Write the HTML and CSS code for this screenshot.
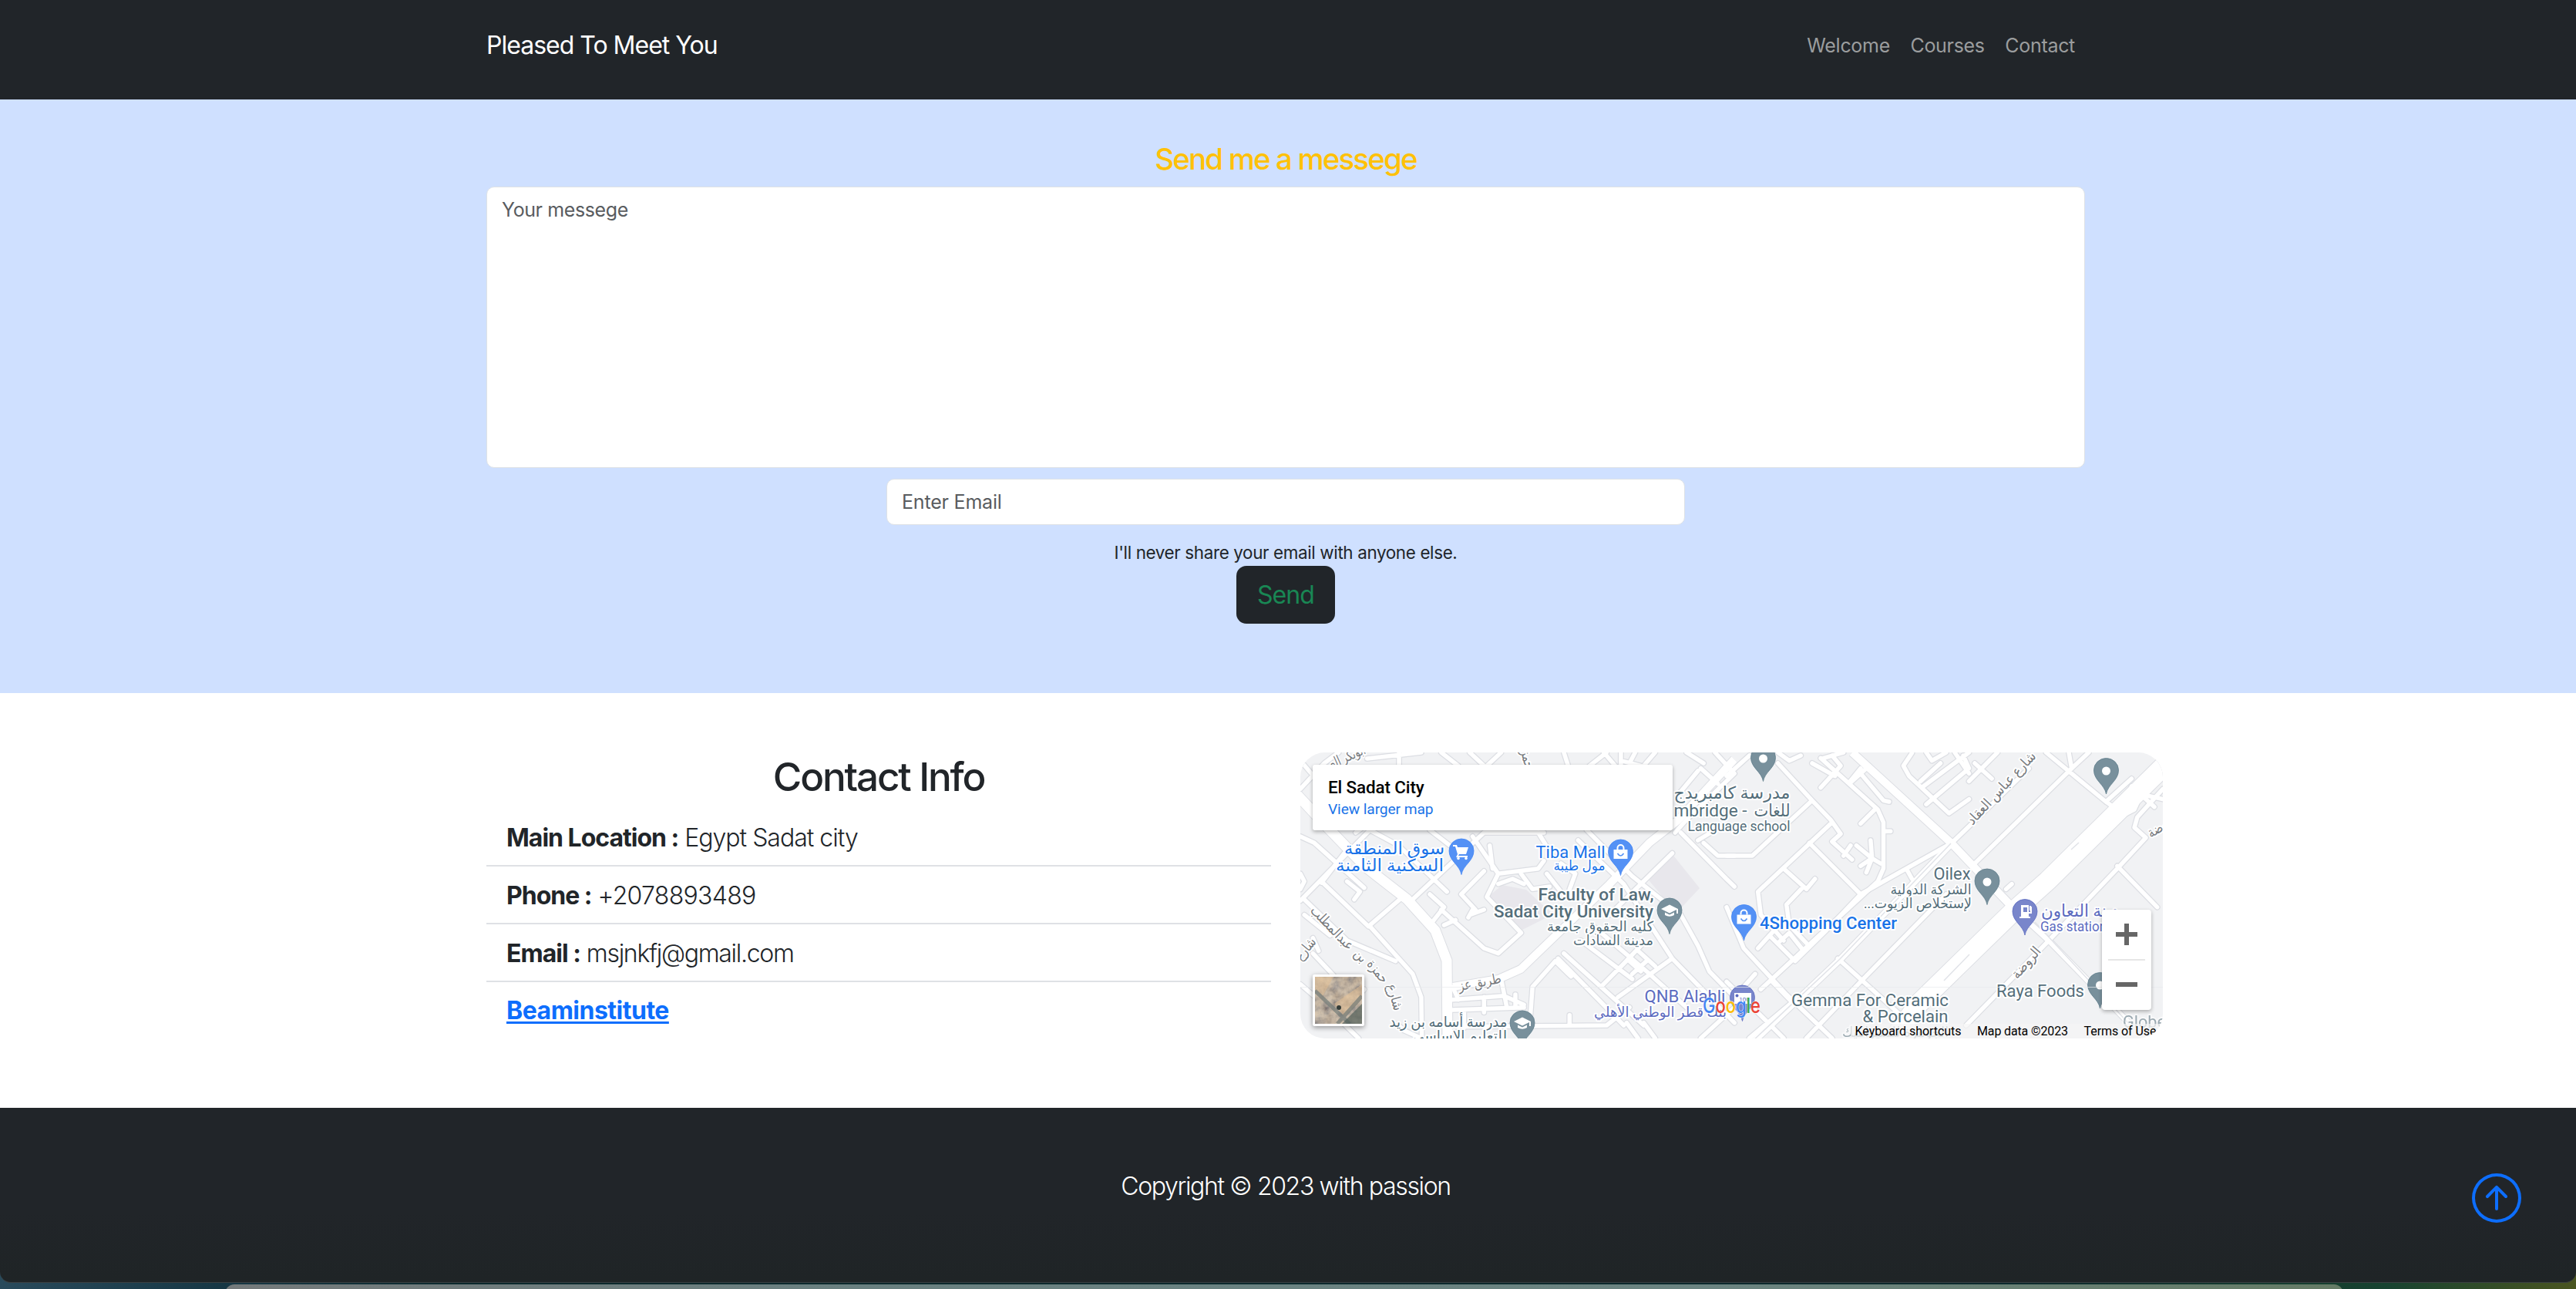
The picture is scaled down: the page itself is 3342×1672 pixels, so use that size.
FILE: index.html
```html
<!DOCTYPE html>
<html lang="en">
<head>
<meta charset="utf-8">
<title>Pleased To Meet You</title>
<link rel="stylesheet" href="styles.css">
</head>
<body>
<header class="navbar">
  <div class="container nav-inner">
    <a class="brand">Pleased To Meet You</a>
    <nav class="nav-links"><a>Welcome</a><a>Courses</a><a>Contact</a></nav>
  </div>
</header>

<section class="message">
  <form class="container message-form">
    <h4 class="message-title">Send me a messege</h4>
    <div class="field textarea"><span>Your messege</span></div>
    <div class="field email"><span>Enter Email</span></div>
    <small class="help">I'll never share your email with anyone else.</small>
    <button class="send" type="button"><span>Send</span></button>
  </form>
</section>

<section class="contact">
  <div class="container contact-grid">
    <div class="info">
      <h2 class="info-title"><span>Contact Info</span></h2>
      <ul class="info-list">
        <li><b>Main Location :</b> <span>Egypt Sadat city</span></li>
        <li><b>Phone :</b> <span class="phone">+2078893489</span></li>
        <li><b>Email :</b> <span class="mail">msjnkfj@gmail.com</span></li>
        <li><a class="site-link">Beaminstitute</a></li>
      </ul>
    </div>
    <div class="map">
      <svg class="map-canvas" viewBox="0 0 1119 371" width="1119" height="371">
        <defs>
          <path id="pin" d="M0 30.500C-2 18-16 13-16-.5A16 15.500 0 0 1 16-.5C16 13 2 18 0 30.500Z"/>
          <g id="cap"><path fill="#fff" d="M-11-2 0-7.500 11-2V4H9V-1L0 3.500ZM-6 2.500 0 5.500 6 2.500V6Q0 9.500-6 6Z"/></g>
          <g id="bag"><path fill="#fff" d="M-9-3H9V9H-9Z"/><path fill="none" stroke="#fff" stroke-width="2" d="M-4-3V-5A4 4 0 0 1 4-5V-3"/><path fill="none" stroke="#5491f5" stroke-width="1.600" d="M-4 2Q0 8 4 2"/></g>
          <g id="roads-west" class="road-net">
            <path d="M46 190 130 90 180 48M46 80 100 150M392 48V100M470 48 280 72M540 48 600 100M700 100 750 48M640 48 690 100M970 48 985 100M1060 100 1120 48M1110 48 1150 100M1170 48V100M1170 80 1240 100M1220 48 1200 90M1250 100 1290 48M1568 130 1400 310 1360 360M1380 200 1440 120M1450 110 1510 170M1500 48 1568 130M1400 48 1460 90"/>
            <path d="M46 375 95 400 270 575M46 625 290 350M46 520 60 550 46 580M120 550 285 725M285 725 405 610M210 550 255 590 235 620M60 620 210 780 380 860M60 680 150 760M110 820 90 770M90 830 200 960M290 725 440 910 470 1000 472 1160M200 440 120 555M240 360 265 340M290 350 390 410 560 590M430 630 690 360 900 360M500 600 550 650 500 720M500 350 570 410M650 375 740 520M710 410 720 500M740 520 880 500 900 470M690 510 610 600 660 660M640 680 690 660M650 660 635 690M740 520 700 610 820 750M820 750 740 830 690 810 540 660M740 560 790 540 830 560M820 520 860 580 920 570M910 520 960 590M960 480 1010 520 990 580M880 360 930 450M550 720 590 700"/>
            <path d="M1020 390 1180 560 1350 850 1568 1100M1050 350 1210 530 1380 680 1440 800 1480 900 1568 1000M1380 360 1540 540 1568 570M1350 440 1130 680M1460 400 1510 450 1568 450M1440 390 1500 350M950 850 1180 1110M970 830 1100 960 1250 1110M1030 780 1210 930M1080 730 1260 900 1400 1040M940 860 860 960 850 1110M940 860 995 920M1100 960 1180 870 1240 800M1160 1000 1350 850M1210 910 1260 860M1230 820 1290 880M1200 860 1240 900M580 1010 760 995 830 1030M580 1050 830 1040M580 960 600 1010M750 930 770 1040M800 990V1040M690 1000V1060M620 1050V1120M580 1115 1120 1110 1200 1040M990 1070V1110M250 1160 130 1030 46 950M270 970 220 1030M390 1110 410 1130 470 1160M1230 1160 1190 1100M1290 1160 1250 1100M1450 1160 1568 1040"/>
          </g>
          <g id="roads-east" class="road-net">
            <path d="M0 140 80 60M180 90 300 235 365 310 400 365 370 395 440 465M300 235 90 450H0M370 320 110 590 120 680 200 780M290 400 470 600M200 500 280 580 310 540M270 570 210 640 220 720 280 790M410 450 435 410M470 110 430 165M330 185 400 100 370 60M300 90 380 140M340 70 410 48M180 48 220 80 260 60M330 70 430 170 530 270 550 320V500L530 550 120 970M500 100 430 170M470 130 550 235 570 240M520 270 470 325M550 355H575M505 390 510 460 540 480M455 410 510 460 470 490M510 460 490 515M650 50 620 100 640 140 780 285 850 230M700 48 720 80 770 48M690 180 850 48M750 90 680 160M830 60 850 110 700 250M870 90 930 150M850 160 950 48M800 48 850 130M1060 110 790 400M1200 48 1210 110 870 480M1120 48 1330 240 1370 270M1210 110 1270 48M1330 240 1420 150"/>
            <path d="M0 650 60 810 210 990 370 1160M110 810 200 700M150 760 240 860M180 790 220 750 270 820M240 860 350 740 470 600 790 400M630 500 650 540M0 940 200 1160M60 960 100 910M160 940 230 1020 80 1160M280 1160 470 940 770 600M390 850 620 1080 700 1160M1530 190 1440 300 1430 340 1470 380 1370 500 1130 780 840 1110M1370 490 1510 650M1360 310 1430 270 1450 220M1420 180 1500 260M1450 210 1530 230M980 580 1000 560"/>
          </g>
        </defs>
        <rect width="1119" height="371" fill="#f1f2f4"/>
        <g fill="#e8e7ec"><path d="M448 161 481 130 518 176 488 208Z"/><path d="M245 186 262 172 293 178 310 194 328 210 288 230Z"/></g>
        <g class="casing">
          <use href="#roads-west" transform="translate(-17 -16) scale(.37 .33333)"/>
          <use href="#roads-east" transform="translate(553 -16) scale(.37 .33333)"/>
        </g>
        <g fill="none" stroke="#dcdee3">
          <path stroke-width="15" d="M-4 55 34 96 84 148 138 190 175 231 190 270 191 375"/>
          <path stroke-width="12" d="M198 304 257 294 286 281 338 231 401 171 453 117 490 88 563 9"/>
          <path stroke-width="12" d="M716 0 845 118 923 200"/><path stroke-width="9" d="M923 200 974 247 1080 356"/>
          <path stroke-width="10" d="M845 118 701 268 585 378"/>
          <path stroke-width="27" d="M1125 13 970 166 923 208 803 325 770 371"/>
        </g>
        <g class="surface">
          <use href="#roads-west" transform="translate(-17 -16) scale(.37 .33333)"/>
          <use href="#roads-east" transform="translate(553 -16) scale(.37 .33333)"/>
        </g>
        <g fill="none" stroke="#fff">
          <path stroke-width="13" d="M-4 55 34 96 84 148 138 190 175 231 190 270 191 375"/>
          <path stroke-width="10" d="M198 304 257 294 286 281 338 231 401 171 453 117 490 88 563 9"/>
          <path stroke-width="10" d="M716 0 845 118 923 200"/><path stroke-width="7" d="M923 200 974 247 1080 356"/>
          <path stroke-width="8" d="M845 118 701 268 585 378"/>
          <path stroke-width="25" d="M1125 13 970 166 923 208 803 325 770 371"/>
        </g>
        <path d="M844 118 700 268 585 376M953 220 1075 352M1000 126 1010 117M835 296 868 262" fill="none" stroke="#e1e3e8" stroke-width="1.500"/>
        <g class="labels street">
          <text x="58" y="13" textLength="58" lengthAdjust="spacingAndGlyphs" transform="rotate(-24 58 10)">أبوبكر الص</text>
          <text x="289" y="10" textLength="24" lengthAdjust="spacingAndGlyphs" transform="rotate(75 289 10)">حمز</text>
          <text x="40" y="233" textLength="72" lengthAdjust="spacingAndGlyphs" transform="rotate(46 40 229)">عبدالمطلب</text>
          <text x="77" y="269" textLength="16" lengthAdjust="spacingAndGlyphs" transform="rotate(48 77 265)">بن</text>
          <text x="99" y="289" textLength="33" lengthAdjust="spacingAndGlyphs" transform="rotate(52 99 285)">حمزة</text>
          <text x="121" y="322" textLength="35" lengthAdjust="spacingAndGlyphs" transform="rotate(74 121 318)">شارع</text>
          <text x="8" y="260" textLength="32" lengthAdjust="spacingAndGlyphs" transform="rotate(-50 8 256)">شارع</text>
          <text x="233" y="304" textLength="56" lengthAdjust="spacingAndGlyphs" transform="rotate(-11 233 300)">طريق عز</text>
          <text x="910" y="52" textLength="122" lengthAdjust="spacingAndGlyphs" transform="rotate(-47 910 47)">شارع عباس العقاد</text>
          <text x="943" y="278" textLength="48" lengthAdjust="spacingAndGlyphs" transform="rotate(-49 943 274)">الروضة</text>
          <text x="1116" y="103" textLength="34" lengthAdjust="spacingAndGlyphs" transform="rotate(-30 1116 99)">روضة</text>
        </g>
        <g class="labels shop">
          <text x="122" y="132" textLength="130" lengthAdjust="spacingAndGlyphs">سوق المنطقة</text>
          <text x="116" y="154" textLength="140" lengthAdjust="spacingAndGlyphs">السكنية الثامنة</text>
          <text x="350.500" y="136.500" textLength="90" lengthAdjust="spacingAndGlyphs">Tiba Mall</text>
          <text class="small" x="362" y="153" textLength="67" lengthAdjust="spacingAndGlyphs">مول طيبة</text>
          <text class="strong" x="685" y="229" textLength="178" lengthAdjust="spacingAndGlyphs">4Shopping Center</text>
        </g>
        <g class="labels place">
          <text class="strong" x="383.500" y="191.500" textLength="150" lengthAdjust="spacingAndGlyphs">Faculty of Law,</text>
          <text class="strong" x="354.500" y="214" textLength="207" lengthAdjust="spacingAndGlyphs">Sadat City University</text>
          <text class="small" x="389" y="232" textLength="138" lengthAdjust="spacingAndGlyphs">كليه الحقوق جامعة</text>
          <text class="small" x="406" y="250" textLength="104" lengthAdjust="spacingAndGlyphs">مدينة السادات</text>
          <text class="mid" x="192" y="356" textLength="153" lengthAdjust="spacingAndGlyphs">مدرسة أسامه بن زيد</text>
          <text class="mid" x="207" y="374" textLength="122" lengthAdjust="spacingAndGlyphs">للتعليم الاساسي</text>
          <text x="560" y="60" textLength="151" lengthAdjust="spacingAndGlyphs">مدرسة كامبريدج</text>
          <text x="532" y="83" textLength="95" lengthAdjust="spacingAndGlyphs">mbridge -</text>
          <text x="612" y="83" textLength="47" lengthAdjust="spacingAndGlyphs">للغات</text>
          <text class="small" x="569" y="101.500" textLength="133" lengthAdjust="spacingAndGlyphs">Language school</text>
          <text x="845.500" y="165" textLength="48" lengthAdjust="spacingAndGlyphs">Oilex</text>
          <text class="small" x="818" y="184" textLength="105" lengthAdjust="spacingAndGlyphs">الشركة الدولية</text>
          <text class="small" x="801" y="202" textLength="140" lengthAdjust="spacingAndGlyphs" direction="rtl">لإستخلاص الزيوت...</text>
          <text x="960" y="317" textLength="114" lengthAdjust="spacingAndGlyphs">Raya Foods</text>
          <text x="739" y="329" textLength="204" lengthAdjust="spacingAndGlyphs">Gemma For Ceramic</text>
          <text x="785" y="349.500" textLength="111" lengthAdjust="spacingAndGlyphs">&amp; Porcelain</text>
          <g opacity=".55"><text class="small" x="772" y="369" textLength="138" lengthAdjust="spacingAndGlyphs">الجوهرة للسيراميك</text>
          <text x="1095" y="357" textLength="56" lengthAdjust="spacingAndGlyphs">Globe</text></g>
        </g>
        <g class="labels bank">
          <text x="499" y="324" textLength="105" lengthAdjust="spacingAndGlyphs">QNB Alahli</text>
          <text class="small" x="467" y="343" textLength="172" lengthAdjust="spacingAndGlyphs">بنك قطر الوطني الأهلي</text>
          <text x="1018" y="213" textLength="114" lengthAdjust="spacingAndGlyphs">مدينة التعاون</text>
          <text class="small" x="1003" y="232" textLength="86" lengthAdjust="spacingAndGlyphs">Gas station</text>
        </g>
        <g fill="#78909c" stroke="#607d8b" stroke-width=".8">
          <use href="#pin" x="600.500" y="7"/><use href="#pin" x="1045.500" y="23.500"/><use href="#pin" x="891" y="167"/><use href="#pin" x="1037.500" y="301.500"/><use href="#pin" x="479" y="205"/><use href="#pin" x="288" y="351"/>
        </g>
        <g fill="#fff"><circle cx="600.500" cy="8" r="5.500"/><circle cx="1045.500" cy="24" r="5.500"/><circle cx="891" cy="168" r="5.500"/><circle cx="1037.500" cy="302" r="5.500"/></g>
        <use href="#cap" x="479" y="205"/><use href="#cap" x="288" y="351"/>
        <g fill="#5491f5" stroke="#4285f4" stroke-width=".8"><use href="#pin" x="209" y="128"/><use href="#pin" x="415.500" y="129"/><use href="#pin" x="575.500" y="213.500"/></g>
        <use href="#bag" x="415.500" y="129"/><use href="#bag" x="575.500" y="213.500"/>
        <path fill="#fff" d="M198 120H203L204 123H218L215 132H206L205 134H217V136H202L204 132 201 122H198Z"/><circle cx="205" cy="137.500" r="1.800" fill="#fff"/><circle cx="215" cy="137.500" r="1.800" fill="#fff"/>
        <g fill="#7986cb" stroke="#5c6bc0" stroke-width=".8"><use href="#pin" x="940" y="206.500"/><use href="#pin" x="573.500" y="318"/></g>
        <path fill="#fff" fill-rule="evenodd" d="M935 198H945V213H947V215H933V213H935ZM938 201V207H943V201Z"/><path d="M945 208H948V200M947 199V205" fill="none" stroke="#fff" stroke-width="2"/>
        <rect x="563" y="312" width="22" height="14" fill="#fff"/><circle cx="566.500" cy="315.500" r="2" fill="#5c6bc0"/><text class="atm" x="576" y="323">100</text>
        <g class="google"><text x="522" y="337.500" textLength="75" lengthAdjust="spacingAndGlyphs"><tspan fill="#4285f4">G</tspan><tspan fill="#ea4335">o</tspan><tspan fill="#fbbc04">o</tspan><tspan fill="#4285f4">g</tspan><tspan fill="#34a853">l</tspan><tspan fill="#ea4335">e</tspan></text></g>
        <path d="M0 304.500H1119" stroke="#e7e9ec" stroke-width=".7"/>
        <path fill="#f5f5f5" opacity=".7" d="M714 352H1119V371H714Z"/>
        <g class="legal"><text x="719.500" y="367" textLength="138">Keyboard shortcuts</text><text x="878" y="367" textLength="118">Map data ©2023</text><text x="1016.500" y="367" textLength="94">Terms of Use</text></g>
      </svg>
      <div class="place-card"><strong>El Sadat City</strong><a>View larger map</a></div>
      <div class="satellite">
        <svg viewBox="0 0 61 61" width="61" height="61" preserveAspectRatio="none">
          <filter id="terrain" x="0" y="0" width="1" height="1"><feTurbulence type="fractalNoise" baseFrequency=".09" numOctaves="4" seed="8"/><feColorMatrix values="1.100 0 0 0 .02  .9 .1 0 0 0  .6 .2 0 0 .03  0 0 0 0 1"/></filter>
          <rect width="61" height="61" fill="#a8957d"/><rect width="61" height="61" filter="url(#terrain)" opacity=".65"/>
          <path d="M0 0 24 0 10 25 0 17ZM25 35 61 10V29L38 52Z" fill="#e2bd92" opacity=".5"/>
          <path d="M0 18 45 61M61 25 29 61" stroke="#737b78" stroke-width="5" opacity=".7"/><path d="M61 35V61H35Z" fill="#53615b" opacity=".7"/><circle cx="31" cy="40" r="3" fill="#353d39"/>
        </svg>
      </div>
      <div class="zoom-control">
        <svg viewBox="0 0 64 130" width="64" height="130"><path d="M18 32H46M32 18V46M18 97H46" stroke="#666" stroke-width="6"/><path d="M8 65H56" stroke="#e6e6e6" stroke-width="2"/></svg>
      </div>
    </div>
  </div>
</section>

<footer class="footer">
  <p class="copyright">Copyright © 2023 with passion</p>
  <a class="to-top"><svg viewBox="0 0 16 16" width="64" height="64" fill="#0d6efd"><path d="M1 8a7 7 0 1 0 14 0A7 7 0 0 0 1 8m15 0A8 8 0 1 1 0 8a8 8 0 0 1 16 0m-7.500 3.500a.5.5 0 0 1-1 0V5.707L5.354 7.854a.5.5 0 1 1-.708-.708l3-3a.5.5 0 0 1 .708 0l3 3a.5.5 0 0 1-.708.708L8.500 5.707z"/></svg></a>
</footer>
<div class="desktop-edge"><div class="dock-edge"></div></div>
</body>
</html>
```
FILE: styles.css
```css
* { box-sizing: border-box; }
body { margin: 0; font-family: Inter, "Liberation Sans", sans-serif; font-size: 25.6px; color: #212529; background: #fff; overflow: hidden; }
h2, h4, p, ul { margin: 0; padding: 0; }
.container { width: 2074px; margin: 0 auto 0 631px; }

.navbar { height: 129px; background: #212529; }
.nav-inner { display: flex; justify-content: space-between; align-items: center; height: 117px; padding-right: 13px; }
.brand { color: #fff; font-size: 32px; letter-spacing: -1px; }
.nav-links { display: flex; gap: 26.500px; color: #9b9d9e; font-size: 25px; letter-spacing: -.3px; }

.message { height: 770px; background: #cfe0ff; }
.message-form { display: flex; flex-direction: column; align-items: center; padding-top: 54px; }
.message-title { color: #ffc107; font-size: 38.400px; font-weight: 550; line-height: 46px; letter-spacing: -1.820px; margin-bottom: 13px; }
.field { background: #fff; border: 1.600px solid #dee2e6; border-radius: 10px; color: #595c5f; font-size: 25px; line-height: 38px; padding: 10px 19px; letter-spacing: -.2px; }
.textarea { width: 2074px; height: 365px; margin-bottom: 14px; letter-spacing: -.4px; }
.email { width: 1036px; height: 60px; }
.help { font-size: 22.400px; line-height: 34px; margin: 19px 0 0; letter-spacing: -.350px; }
.send { width: 128px; height: 75px; background: #212529; color: #198754; border: 0; border-radius: 13px; font: 32px/48px Inter, sans-serif; padding: 0; letter-spacing: -.9px; }

.contact { height: 538px; }
.contact-grid { display: grid; grid-template-columns: 1018px 1119px; column-gap: 38px; padding-top: 77px; }
.info-title { text-align: center; font-size: 51.200px; font-weight: 550; line-height: 63px; letter-spacing: -2.150px; margin-bottom: 10px; }
.info-list { list-style: none; font-size: 32px; font-weight: 300; }
.info-list li { height: 75px; padding: 14px 26px 0; line-height: 48px; border-bottom: 2px solid #dfe1e5; letter-spacing: -1px; white-space: nowrap; }
.info-list li:last-child { border: 0; padding-top: 13px; }
.info-list b, .site-link { font-weight: 700; letter-spacing: -1px; }
.info-list .phone { letter-spacing: -.7px; }
.info-list .mail { letter-spacing: -1.300px; }
.info-list .site-link { color: #0d6efd; letter-spacing: -.5px; text-decoration: underline; text-decoration-thickness: 3px; text-underline-offset: 3px; }

.map { position: relative; width: 1119px; height: 371px; border-radius: 32px; overflow: hidden; font-family: Roboto, sans-serif; }
.map-canvas { display: block; }
.casing, .surface { fill: none; stroke-linecap: round; stroke-linejoin: round; }
.casing { stroke: #dcdee3; stroke-width: 8px; }
.surface { stroke: #fff; stroke-width: 5.500px; }
.road-net path { vector-effect: non-scaling-stroke; }
.labels text { font-family: Roboto, "DejaVu Sans", sans-serif; font-size: 22px; text-anchor: middle; stroke: #fff; stroke-width: 4px; stroke-linejoin: round; paint-order: stroke; }
.labels .small, .street text { font-size: 18px; }
.labels .mid { font-size: 19px; }
.labels .strong { font-weight: 500; }
.shop { fill: #1a73e8; }
.place { fill: #546e7a; }
.bank { fill: #5c6bc0; }
.street { fill: #777a7e; }
.atm { font: 8px Roboto, sans-serif; fill: #5c6bc0; text-anchor: middle; }
.google { font: 500 27px Inter, sans-serif; stroke: #fff; stroke-width: 1px; paint-order: stroke; }
.legal { font: 16px Roboto, sans-serif; fill: #000; }
.place-card { position: absolute; left: 16px; top: 16px; width: 467px; height: 85px; padding: 16px 20px; display: flex; flex-direction: column; background: #fff; border-radius: 3px; box-shadow: 0 2px 5px rgba(0,0,0,.3); }
.place-card strong { color: #000; font-size: 22.400px; font-weight: 500; line-height: 27px; letter-spacing: -.1px; }
.place-card a { color: #1a73e8; font-size: 19.200px; line-height: 29px; letter-spacing: -.1px; }
.satellite { position: absolute; left: 16px; top: 288px; width: 67px; height: 67px; border: 3px solid #fff; border-radius: 3px; overflow: hidden; box-shadow: 0 2px 6px rgba(0,0,0,.4); }
.satellite svg { display: block; }
.zoom-control { position: absolute; left: 1040px; top: 204px; width: 64px; height: 130px; background: #fff; border-radius: 4px; box-shadow: 0 2px 5px rgba(0,0,0,.3); }

.footer { position: relative; height: 227px; background: linear-gradient(#212529 60%, #1f2426); border-bottom: 1px solid #3b4042; border-radius: 0 0 14px 14px; padding-top: 78px; }
.copyright { color: #fff; font-size: 32px; font-weight: 350; line-height: 48px; letter-spacing: -1.350px; text-align: center; margin-right: 6px; }
.to-top { position: absolute; right: 71px; top: 85px; width: 64px; height: 64px; }
.to-top svg { display: block; }
.desktop-edge { height: 22px; margin-top: -14px; padding-top: 16px; position: relative; z-index: -1; background: linear-gradient(90deg, #294a5b, #173744 290px, #0b282c 600px, #0b282c 2600px, #184330 3100px, #4a5520); }
.dock-edge { height: 12px; margin: 0 302px 0 292px; border-radius: 20px 20px 0 0; background: linear-gradient(90deg, #74797a, #698080 30%, #6b8481 70%, #657b65); }
```
